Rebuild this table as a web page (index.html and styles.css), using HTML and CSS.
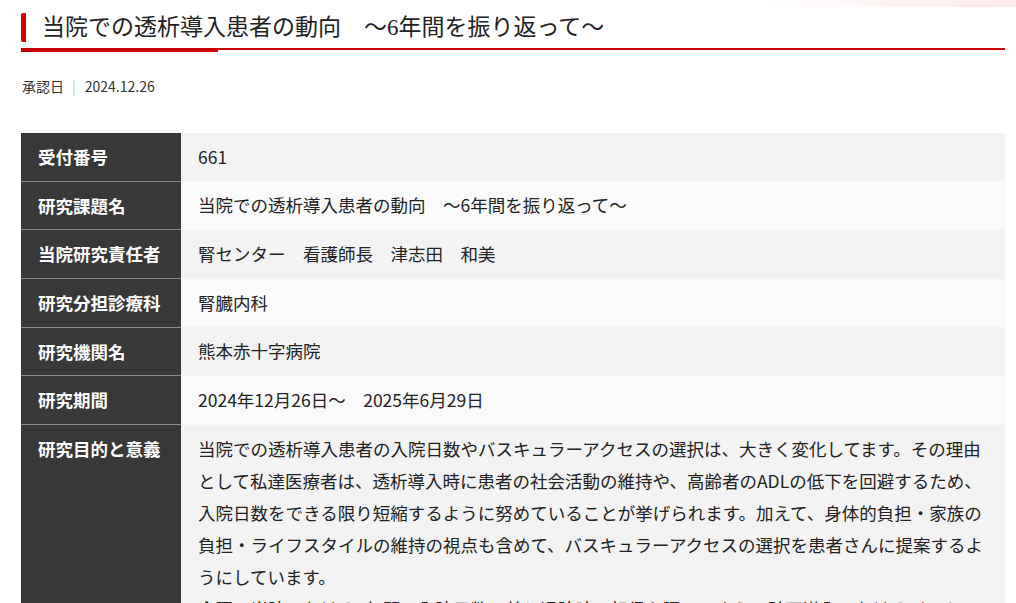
FILE: index.html
```html
<!DOCTYPE html>
<html lang="ja">
<head>
  <meta charset="UTF-8">
  <meta name="viewport" content="width=device-width, initial-scale=1.0">
  <title>当院での透析導入患者の動向　〜6年間を振り返って〜</title>
  <link rel="stylesheet" href="styles.css">
</head>
<body>
  <div class="top-band"></div>

  <main class="page">
    <h1 class="page-title"><span class="page-title-text">当院での透析導入患者の動向　〜6年間を振り返って〜</span></h1>
    <div class="title-rule"></div>

    <p class="approved">承認日<span class="approved-sep">|</span>2024.12.26</p>

    <table class="study-table">
      <tr>
        <th>受付番号</th>
        <td>661</td>
      </tr>
      <tr>
        <th>研究課題名</th>
        <td>当院での透析導入患者の動向　〜6年間を振り返って〜</td>
      </tr>
      <tr>
        <th>当院研究責任者</th>
        <td>腎センター　看護師長　津志田　和美</td>
      </tr>
      <tr>
        <th>研究分担診療科</th>
        <td>腎臓内科</td>
      </tr>
      <tr>
        <th>研究機関名</th>
        <td>熊本赤十字病院</td>
      </tr>
      <tr>
        <th>研究期間</th>
        <td>2024年12月26日〜　2025年6月29日</td>
      </tr>
      <tr>
        <th>研究目的と意義</th>
        <td>
          <p class="text">当院での透析導入患者の入院日数やバスキュラーアクセスの選択は、大きく変化してます。その理由として私達医療者は、透析導入時に患者の社会活動の維持や、高齢者のADLの低下を回避するため、入院日数をできる限り短縮するように努めていることが挙げられます。加えて、身体的負担・家族の負担・ライフスタイルの維持の視点も含めて、バスキュラーアクセスの選択を患者さんに提案するようにしています。</p>
          <p class="text">今回、当院における6年間の入院日数の差と退院時の転帰を調べ、さらに計画導入におけるバスキュラーアクセスの選択の変化を明らかにすることで、今後の透析導入支援に役立てたいと考えています。</p>
        </td>
      </tr>
    </table>
  </main>
</body>
</html>
```

FILE: styles.css
```css
body {
  margin: 0;
  font-family: "Noto Sans CJK JP", "Noto Sans", sans-serif;
  color: #222;
  background: #fff;
}

.top-band {
  height: 7px;
  background: linear-gradient(to right, rgba(255, 255, 255, 0) 74%, #fdeaea 100%);
}

.page {
  margin: 0 11px 0 21px;
}

.page-title {
  margin: 6px 0 0;
  font-family: "Liberation Serif", "Noto Sans CJK JP", serif;
  font-weight: normal;
  font-size: 23px;
  line-height: 29px;
  color: #222;
}

.page-title-text {
  display: block;
  border-left: 5px solid #cc0000;
  border-radius: 2px;
  padding-left: 16px;
}

/* thin full-width line with a thicker accent at the start */
.title-rule {
  height: 4px;
  margin-top: 6px;
  background:
    linear-gradient(#cc0000, #cc0000) 0 0 / 197px 4px no-repeat,
    linear-gradient(#cc0000, #cc0000) 0 0 / 100% 2px no-repeat;
}

.approved {
  margin: 24px 0 0 1px;
  font-size: 14px;
  line-height: 20px;
  color: #333;
}

.approved-sep {
  color: #a9c9e2;
  margin: 0 9px 0 8px;
}

.study-table {
  width: 100%;
  margin-top: 37px;
  border-collapse: collapse;
  font-size: 17.5px;
  line-height: 32px;
}

.study-table th,
.study-table td {
  padding: 8px 17px 7.7px;
  text-align: left;
  vertical-align: top;
}

.study-table th {
  width: 126px;
  background-color: #383838;
  color: #fff;
  font-weight: 700;
  border-bottom: 1px solid #8a8a8a;
  white-space: nowrap;
}

.study-table td {
  background-color: #f3f3f3;
}

.study-table tr:nth-child(even) td {
  background-color: #fafafa;
}

.text {
  margin: 0;
}
```
